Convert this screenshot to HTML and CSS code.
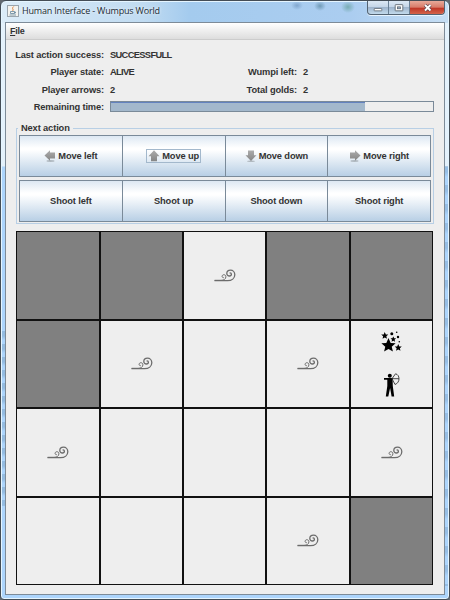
FILE: index.html
```
<!DOCTYPE html>
<html lang="en">
<head>
<meta charset="utf-8">
<title>Human Interface - Wumpus World</title>
<link rel="stylesheet" href="styles.css">
</head>
<body>
<svg class="defs" aria-hidden="true">
  <defs>
    <linearGradient id="grey" x1="0" y1="0" x2="0" y2="1"><stop offset="0" stop-color="#acacac"/><stop offset="1" stop-color="#858585"/></linearGradient>
    <symbol id="arrow-left" viewBox="0 0 12 12"><ellipse cx="6.5" cy="11" rx="4" ry=".9" fill="#b0b9c0"/><path fill="url(#grey)" d="M.5 5.500 6 .3v2.200h5v6H6v2.200z"/></symbol>
    <symbol id="arrow-right" viewBox="0 0 12 12"><ellipse cx="5.500" cy="11" rx="4" ry=".9" fill="#b0b9c0"/><path fill="url(#grey)" d="M11.500 5.500 6 .3v2.200H1v6h5v2.200z"/></symbol>
    <symbol id="arrow-up" viewBox="0 0 12 12"><path fill="url(#grey)" d="M6 .3 11.500 6.200H9v5H3v-5H.5z"/></symbol>
    <symbol id="arrow-down" viewBox="0 0 12 12"><ellipse cx="6" cy="11.200" rx="4" ry=".8" fill="#b0b9c0"/><path fill="url(#grey)" d="M6 11 .5 5.200H3V.6h6v4.600h2.500z"/></symbol>
    <symbol id="breeze" viewBox="0 0 22 14"><g fill="none" stroke="#6c6c6c" stroke-linecap="round"><path stroke-width="1.300" d="M1 11.700h12.500c4.300 0 7.300-2.500 7.300-6C20.800 2.900 18.800 1.200 16.500 1.200c-2.200 0-3.700 1.300-3.700 3.200 0 1.600 1.200 2.600 2.600 2.600 1.200 0 2-.8 2-1.800 0-.8-.6-1.300-1.300-1.300"/><path stroke-width="1" d="M1 11.300h6c3 0 4.900-1.300 4.900-3.500 0-1.300-.9-2.100-2-2.100s-1.800.8-1.800 1.700c0 .8.600 1.300 1.300 1.300"/></g></symbol>
    <symbol id="star" viewBox="-10 -10 20 20"><path d="M0-10 2.900-3.300 9.500-3.100 4.300 1.500 5.900 8.100 0 4.500-5.900 8.100-4.300 1.500-9.500-3.100-2.900-3.300z"/></symbol>
  </defs>
</svg>
<div class="window">
  <header class="titlebar">
    <svg class="java" viewBox="0 0 12 12"><rect x=".5" y=".5" width="11" height="11" fill="#f4f3ef" stroke="#9ba5ad"/><path d="M6.700 1.500C4 3.800 7.300 4 5.500 6" fill="none" stroke="#dc7c35"/><path d="M3.500 6.500h4v2h-4zM7.500 7h1v1h-1M2.500 10h6.500" fill="none" stroke="#64859c" stroke-width=".8"/></svg>
    <span class="title">Human Interface - Wumpus World</span>
    <div class="controls">
      <svg viewBox="0 0 21 14"><rect x="6.500" y="7.500" width="8" height="2.500" rx=".5" fill="#fff" stroke="#59626c" stroke-width=".8"/></svg>
      <svg viewBox="0 0 21 14"><rect x="6.500" y="3.500" width="8" height="6.500" rx=".5" fill="#fff" stroke="#59626c" stroke-width=".9"/><rect x="9" y="5.800" width="3" height="2" fill="#9bb0c7" stroke="#59626c" stroke-width=".8"/></svg>
      <svg class="close" viewBox="0 0 35 14"><path d="m15 4 5.500 5.500m0-5.500L15 9.500" stroke="#5c4550" stroke-width="3.200"/><path d="m15 4 5.500 5.500m0-5.500L15 9.500" stroke="#fff" stroke-width="1.900"/></svg>
    </div>
  </header>
  <main class="client">
    <nav class="menu"><span><u>F</u>ile</span></nav>
    <section class="status">
      <b>Last action success:</b><span class="caps">SUCCESSFULL</span><b></b><span></span>
      <b>Player state:</b><span class="caps">ALIVE</span><b>Wumpi left:</b><span>2</span>
      <b>Player arrows:</b><span>2</span><b>Total golds:</b><span>2</span>
      <b>Remaining time:</b><div class="progress"><div class="bar"></div></div>
    </section>
    <fieldset class="actions">
      <legend>Next action</legend>
      <div class="row">
        <button><span class="face"><svg><use href="#arrow-left"/></svg>Move left</span></button>
        <button><span class="face focus"><svg><use href="#arrow-up"/></svg>Move up</span></button>
        <button><span class="face"><svg><use href="#arrow-down"/></svg>Move down</span></button>
        <button><span class="face"><svg><use href="#arrow-right"/></svg>Move right</span></button>
      </div>
      <div class="row">
        <button>Shoot left</button><button>Shoot up</button><button>Shoot down</button><button>Shoot right</button>
      </div>
    </fieldset>
    <section class="board">
      <div class="cell dark"></div><div class="cell dark"></div><div class="cell"><svg class="breeze"><use href="#breeze"/></svg></div><div class="cell dark"></div><div class="cell dark"></div>
      <div class="cell dark"></div><div class="cell"><svg class="breeze"><use href="#breeze"/></svg></div><div class="cell"></div><div class="cell"><svg class="breeze"><use href="#breeze"/></svg></div>
      <div class="cell pair">
        <svg class="stars" viewBox="0 0 22 22"><use href="#star" x="0" y="7" width="15" height="15"/><use href="#star" x="0" y="1" width="7.500" height="7.500"/><use href="#star" x="9.300" y="5.300" width="6" height="6"/><use href="#star" x="13.500" y="13" width="7.500" height="7.500"/><circle cx="10.800" cy="2.800" r="1.500"/><circle cx="15.700" cy="1.300" r=".8"/><circle cx="17" cy="6" r="1.200"/><circle cx="18.300" cy="10.800" r=".8"/></svg>
        <svg class="archer" viewBox="0 0 18 24"><circle cx="6.800" cy="2.800" r="2"/><path d="M1 5h9v1.700H9.600L9.800 13l1.400 10.500H8.600L7.100 15l-1.800 8.500H2.800L4.300 13V6.700H1z"/><path d="M9 5.700h7M12.500.8c2.300.5 3.500 2.500 3.500 4.900s-1.200 4.800-4 5.800M12.500.8 9 5.700l3 5.800" fill="none" stroke="#333" stroke-width=".9"/></svg>
      </div>
      <div class="cell"><svg class="breeze"><use href="#breeze"/></svg></div><div class="cell"></div><div class="cell"></div><div class="cell"></div><div class="cell"><svg class="breeze"><use href="#breeze"/></svg></div>
      <div class="cell"></div><div class="cell"></div><div class="cell"></div><div class="cell"><svg class="breeze"><use href="#breeze"/></svg></div><div class="cell dark"></div>
    </section>
  </main>
</div>
</body>
</html>
```
FILE: styles.css
```
* { box-sizing: border-box; }
body { margin: 0; width: 450px; height: 600px; overflow: hidden; background: #626970; font: bold 9.300px "Liberation Sans", Arial, sans-serif; letter-spacing: -.13px; color: #333; }
.defs { position: absolute; width: 0; height: 0; }
svg { display: block; }
.window {
  width: 450px; height: 600px; padding: 0 4px 4px;
  border: 1px solid #444d56; border-radius: 6px 6px 4px 4px;
  box-shadow: inset 0 0 0 1px #e5f5ff;
  background:
    repeating-linear-gradient(#6289aa55 0 5px, transparent 9px 13px) 0 330px / 5px 175px no-repeat,
    repeating-linear-gradient(#587fa544 0 6px, transparent 11px 19px) 444px 165px / 5px 420px no-repeat,
    radial-gradient(ellipse, #3e6f8688, transparent 70%) 313px 0 / 12px 10px no-repeat,
    radial-gradient(ellipse, #4b907e88, transparent 70%) 340px 0 / 14px 12px no-repeat,
    radial-gradient(ellipse, #466f9d66, transparent 70%) 290px 0 / 12px 9px no-repeat,
    linear-gradient(90deg, #dcecf8, #c0dbf1 32%, #a4cbee 42%, #abcdf0 78%, #c6def4) 0 0 / 100% 22px no-repeat,
    linear-gradient(#e4f1fb 0 165px, #add5fc 166px);
}
.titlebar { height: 21px; display: flex; align-items: flex-start; padding-left: 2px; }
.java { width: 12px; height: 12px; margin-top: 4px; }
.title { font: 9px/12px "Open Sans", sans-serif; letter-spacing: -.18px; color: #202b34; margin: 4px 0 0 3px; white-space: nowrap; text-shadow: 0 0 3px #fff; }
.controls { display: flex; margin-left: auto; width: 78px; height: 14px; border: 1px solid #536372; border-top: 0; border-radius: 0 0 4px 4px; overflow: hidden; background: linear-gradient(#dce8f4, #c5d6e8 45%, #9fb5cd 50%, #c2daec); box-shadow: 0 1px #e7f4ff; }
.controls svg { width: 21px; height: 14px; flex: none; border-right: 1px solid #697f94; }
.controls .close { width: 35px; border: 0; background: linear-gradient(#e7a99a, #d87b69 45%, #bf3526 50%, #d76b50); }
.client { height: 573px; border: 1px solid #7d8b98; background: #eee; }
.menu { height: 17px; border-bottom: 1px solid #ccc; background: linear-gradient(#fff, #ddd); padding: 3px 0 0 4px; line-height: 11px; }
.menu span { font-size: 9px; letter-spacing: -.25px; }
.status { display: grid; grid-template-columns: 98px 80px 101px 1fr; grid-auto-rows: 17.330px; column-gap: 6px; padding: 7px 10px 0 0; line-height: 17px; white-space: nowrap; }
.status b { text-align: right; }
.caps { letter-spacing: -.650px; }
.progress { grid-column: 2 / 5; height: 11px; margin-top: 2px; border: 1px solid #7a8a99; }
.bar { width: 79%; height: 9px; background: #a3b8cc; border-top: 1px solid #6382bf; }
.actions { height: 102px; margin: 6px 10px 0; padding: 1px 2px 0; border: 1px solid #b8cfe5; min-width: 0; }
.actions legend { height: 12px; line-height: 12px; margin: 0 0 0 -1px; padding: 0 3px; }
.row { display: flex; height: 42px; margin-bottom: 3px; width: 412px; border-left: 1px solid #7a8a99; }
.row button { flex: 1; padding: 0; border: 1px solid #7a8a99; border-left-width: 0; background: linear-gradient(#dde8f3, #fff 30%, #fff 35%, #b8cfe5); font: inherit; letter-spacing: inherit; color: inherit; display: flex; align-items: center; justify-content: center; }
.face { display: flex; align-items: center; gap: 2px; height: 14px; padding: 0 1px; border: 1px solid transparent; white-space: nowrap; }
.face svg { width: 12px; height: 12px; }
.focus { border-color: #a3b8cc; }
.board { display: grid; grid-template-columns: 82px 81px 81px 82px 81px; grid-template-rows: 87px 86px 87px 86px; gap: 2px; width: 417px; height: 354px; margin: 7px 0 0 10px; padding: 1px; background: #111; }
.cell { display: flex; align-items: center; justify-content: center; background: #eee; min-width: 0; min-height: 0; }
.dark { background: #808080; }
.breeze { width: 22px; height: 14px; }
.pair { flex-direction: column; justify-content: space-around; }
.stars { width: 22px; height: 22px; }
.archer { width: 18px; height: 24px; }
```
